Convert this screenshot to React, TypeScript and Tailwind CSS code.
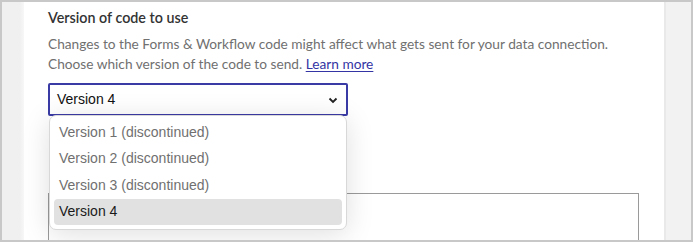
import React from 'react';

const options = [
  { label: 'Version 1 (discontinued)', disabled: true },
  { label: 'Version 2 (discontinued)', disabled: true },
  { label: 'Version 3 (discontinued)', disabled: true },
  { label: 'Version 4', disabled: false },
];

export default function App() {
  return (
    <div className="w-[693px] h-[242px] overflow-hidden border-2 border-[#c8c8c8] bg-[#f2f2f2] flex">
      {/* left gutter */}
      <div className="w-[22px] shrink-0 bg-gradient-to-r from-[#f0f0f0] from-80% to-[#f7f7f7]" />

      {/* main panel */}
      <div className="relative w-[640px] shrink-0 bg-white pl-[24px] pt-[6px] font-['Lato','Noto_Sans',sans-serif]">
        <h2 className="text-[14.3px] leading-[20px] font-semibold text-[#333]">Version of code to use</h2>
        <p className="mt-[6px] text-[13.7px] leading-[20px] text-[#707070]">
          Changes to the Forms &amp; Workflow code might affect what gets sent for your data connection.
          <br />
          Choose which version of the code to send.{' '}
          <a href="#" className="text-[#3434a4] underline underline-offset-2">Learn more</a>
        </p>

        {/* select */}
        <div className="mt-[9px] w-[300px] h-[33px] border-2 border-[#3b3ba6] rounded-[2px] flex items-center justify-between pl-[7px] pr-[8px] font-['Liberation_Sans',Arial,sans-serif] text-[14px] text-[#111]">
          <span>Version 4</span>
          <svg width="10" height="7" viewBox="0 0 10 7" className="mt-[1px]">
            <path d="M1.5 1.5 L5 5 L8.5 1.5" fill="none" stroke="#222" strokeWidth="1.8" />
          </svg>
        </div>

        {/* textarea behind the menu */}
        <div className="mt-[77px] w-[591px] h-[60px] border border-[#9a9a9a]" />

        {/* open dropdown menu */}
        <div className="absolute left-[25px] top-[113px] w-[298px] rounded-[7px] border border-[#d8d8d8] bg-white pt-[3px] pb-[4px] px-[4px] shadow-[0_4px_28px_rgba(0,0,0,0.13)] font-['Liberation_Sans',Arial,sans-serif] text-[14px]">
          {options.map((o) => (
            <div
              key={o.label}
              className={
                o.disabled
                  ? 'h-[26.5px] flex items-center pl-[5px] text-[#707070]'
                  : 'h-[26px] flex items-center pl-[5px] rounded-[4px] bg-[#e1e1e1] text-[#1a1a1a]'
              }
            >
              {o.label}
            </div>
          ))}
        </div>
      </div>

      {/* right gutter */}
      <div className="flex-1 border-l-2 border-[#e9e9e9] bg-[#f2f2f2]" />
    </div>
  );
}
